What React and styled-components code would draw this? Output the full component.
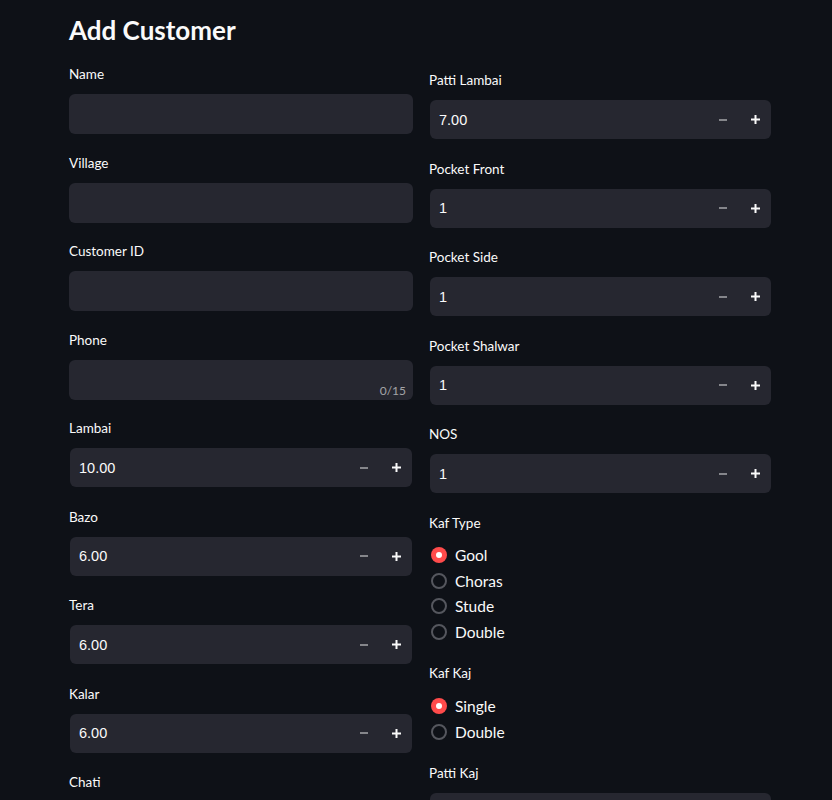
import React from 'react';
import styled, { createGlobalStyle } from 'styled-components';

const GlobalStyle = createGlobalStyle`
  html, body {
    margin: 0;
    padding: 0;
    background-color: #0e1117;
    height: 800px;
    overflow: hidden;
  }
  body {
    font-family: Lato, 'Noto Sans', sans-serif;
    color: #fafafa;
  }
`;

const Page = styled.div`
  padding: 0 60px 0 69px;
  width: 703px;
`;

const Title = styled.h1`
  margin: 0;
  padding: 13px 0 0;
  height: 62px;
  box-sizing: border-box;
  font-family: Lato, 'Noto Sans', sans-serif;
  font-size: 26px;
  font-weight: 700;
  line-height: 34px;
  color: #fafafa;
`;

const Columns = styled.div`
  display: grid;
  grid-template-columns: 344px 343px;
  column-gap: 16px;
`;

const Column = styled.div`
  display: flex;
  flex-direction: column;
  gap: 16.5px;
  padding-top: ${props => props.offset || 0}px;
`;

const Field = styled.div`
  display: flex;
  flex-direction: column;
`;

const Label = styled.label`
  font-size: 13.5px;
  line-height: 24px;
  height: 24px;
  margin-bottom: 8px;
  color: #fafafa;
`;

const TextBox = styled.div`
  position: relative;
  height: 40px;
  background-color: #262730;
  border-radius: 6px;
`;

const Counter = styled.span`
  position: absolute;
  right: 7px;
  bottom: 2px;
  font-size: 12px;
  color: rgba(250, 250, 250, 0.6);
`;

const NumberBox = styled.div`
  display: flex;
  align-items: center;
  height: 39px;
  margin: 0 1px 1px;
  background-color: #262730;
  border-radius: 6px;
`;

const Value = styled.span`
  flex: 1;
  padding-left: 9px;
  font-family: 'Liberation Sans', Arial, sans-serif;
  font-size: 14.5px;
  color: #fafafa;
`;

const Step = styled.button`
  width: 32px;
  height: 100%;
  padding: 0;
  border: none;
  background: transparent;
  display: flex;
  align-items: center;
  justify-content: center;
`;

const RadioList = styled.div`
  display: flex;
  flex-direction: column;
`;

const RadioRow = styled.div`
  display: flex;
  align-items: center;
  height: 25.6px;
  gap: 8px;
  font-size: 15.5px;
  color: #fafafa;
`;

const Dot = styled.span`
  width: 16px;
  height: 16px;
  box-sizing: border-box;
  border-radius: 50%;
  margin-left: 2px;
  display: flex;
  align-items: center;
  justify-content: center;
  background-color: ${props => (props.checked ? '#ff4b4b' : 'transparent')};
  border: ${props => (props.checked ? 'none' : '2px solid #55575e')};
  &::after {
    content: '';
    display: ${props => (props.checked ? 'block' : 'none')};
    width: 6px;
    height: 6px;
    border-radius: 50%;
    background-color: #fff;
  }
`;

const Minus = () => (
  <svg width="8" height="8" viewBox="0 0 8 8">
    <rect x="0" y="3" width="8" height="2" fill="rgba(250,250,250,0.45)" />
  </svg>
);

const Plus = () => (
  <svg width="9" height="9" viewBox="0 0 9 9">
    <rect x="0" y="3.5" width="9" height="2" fill="#fafafa" />
    <rect x="3.5" y="0" width="2" height="9" fill="#fafafa" />
  </svg>
);

const TextInput = ({ label, counter }) => (
  <Field>
    <Label>{label}</Label>
    <TextBox>{counter && <Counter>{counter}</Counter>}</TextBox>
  </Field>
);

const NumberInput = ({ label, value }) => (
  <Field>
    <Label>{label}</Label>
    <NumberBox>
      <Value>{value}</Value>
      <Step><Minus /></Step>
      <Step><Plus /></Step>
    </NumberBox>
  </Field>
);

const Radio = ({ label, options, selected }) => (
  <Field>
    <Label>{label}</Label>
    <RadioList>
      {options.map(opt => (
        <RadioRow key={opt}>
          <Dot checked={opt === selected} />
          {opt}
        </RadioRow>
      ))}
    </RadioList>
  </Field>
);

const App = () => {
  return (
    <Page>
      <GlobalStyle />
      <Title>Add Customer</Title>
      <Columns>
        <Column>
          <TextInput label="Name" />
          <TextInput label="Village" />
          <TextInput label="Customer ID" />
          <TextInput label="Phone" counter="0/15" />
          <NumberInput label="Lambai" value="10.00" />
          <NumberInput label="Bazo" value="6.00" />
          <NumberInput label="Tera" value="6.00" />
          <NumberInput label="Kalar" value="6.00" />
          <NumberInput label="Chati" value="6.00" />
        </Column>
        <Column offset={6}>
          <NumberInput label="Patti Lambai" value="7.00" />
          <NumberInput label="Pocket Front" value="1" />
          <NumberInput label="Pocket Side" value="1" />
          <NumberInput label="Pocket Shalwar" value="1" />
          <NumberInput label="NOS" value="1" />
          <Radio label="Kaf Type" options={['Gool', 'Choras', 'Stude', 'Double']} selected="Gool" />
          <Radio label="Kaf Kaj" options={['Single', 'Double']} selected="Single" />
          <NumberInput label="Patti Kaj" value="1" />
        </Column>
      </Columns>
    </Page>
  );
};

export default App;
